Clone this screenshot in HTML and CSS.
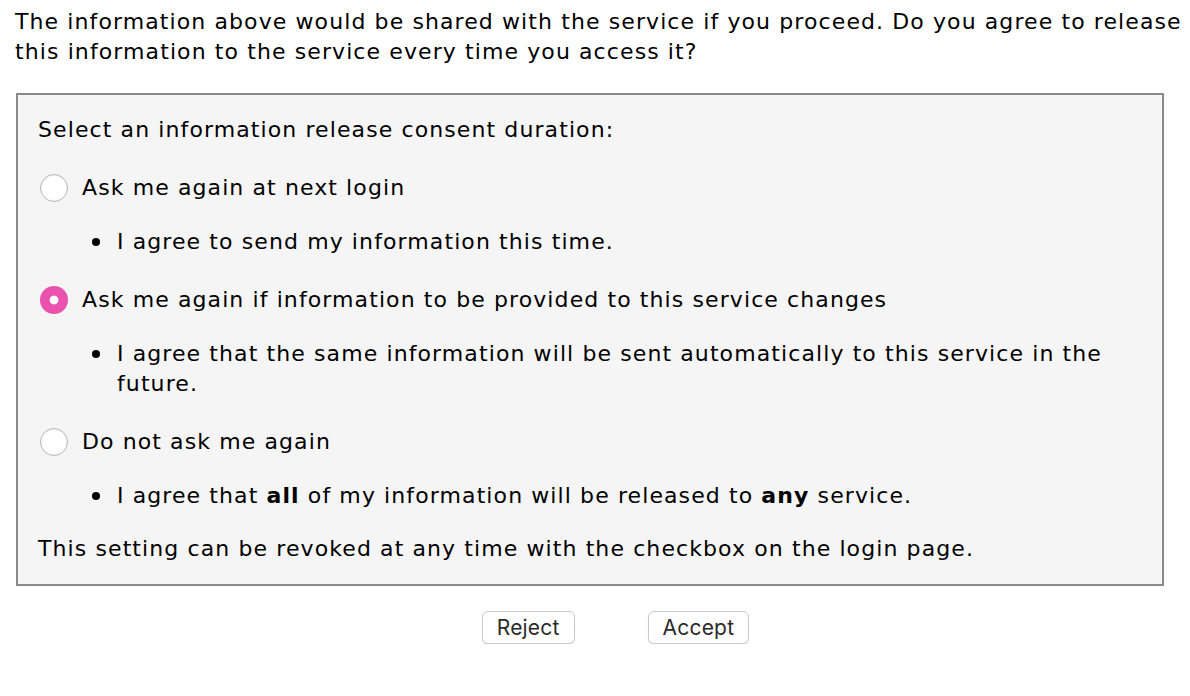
FILE: index.html
```html
<!DOCTYPE html>
<html>
<head>
<meta charset="utf-8">
<link rel="stylesheet" href="styles.css">
</head>
<body>
<div class="page">
  <p class="intro">The information above would be shared with the service if you proceed. Do you agree to release this information to the service every time you access it?</p>
  <form class="consent">
    <div class="box">
      <p class="title">Select an information release consent duration:</p>
      <label class="opt"><span class="radio"></span><span>Ask me again at next login</span></label>
      <ul class="desc"><li>I agree to send my information this time.</li></ul>
      <label class="opt"><span class="radio checked"></span><span>Ask me again if information to be provided to this service changes</span></label>
      <ul class="desc"><li>I agree that the same information will be sent automatically to this service in the future.</li></ul>
      <label class="opt"><span class="radio"></span><span>Do not ask me again</span></label>
      <ul class="desc"><li>I agree that <b>all</b> of my information will be released to <b>any</b> service.</li></ul>
      <p class="note">This setting can be revoked at any time with the checkbox on the login page.</p>
    </div>
    <div class="actions">
      <button type="button" class="btn">Reject</button>
      <button type="button" class="btn">Accept</button>
    </div>
  </form>
</div>
</body>
</html>
```
FILE: styles.css
```css
html, body {
  margin: 0;
  padding: 0;
  background: #ffffff;
}
.page {
  padding: 7px 0 0 15px;
  font-family: "DejaVu Sans", Verdana, sans-serif;
  font-size: 22px;
  line-height: 30px;
  letter-spacing: 1.1px;
  color: #000;
}
.intro {
  margin: 0;
  width: 1172px;
}
.consent {
  margin: 26px 0 0 1px;
  width: 1148px;
}
.box {
  box-sizing: border-box;
  width: 1148px;
  border: 2px solid #8a8a8a;
  background: #f5f5f5;
  padding: 20px 20px 20px 20px;
  display: flex;
  flex-direction: column;
}
.title {
  margin: 0;
}
.opt {
  display: flex;
  align-items: center;
  margin-top: 28px;
  margin-left: 2px;
  gap: 14px;
  height: 30px;
}
.radio {
  box-sizing: border-box;
  width: 28px;
  height: 28px;
  border-radius: 50%;
  border: 1px solid #b8b8b8;
  background: radial-gradient(circle at 50% 40%, #ffffff 60%, #f0f0f0 100%);
  box-shadow: inset 0 1px 1px rgba(0,0,0,0.08);
  flex: none;
}
.radio.checked {
  border: none;
  background: radial-gradient(circle, #ffffff 0 4px, #e953ad 4.8px);
  box-shadow: none;
}
.desc {
  margin: 24px 0 0 0;
  padding: 0 0 0 79px;
  list-style: none;
}
.desc li {
  position: relative;
  line-height: 30px;
}
.desc li::before {
  content: "";
  position: absolute;
  left: -25px;
  top: 11px;
  width: 8px;
  height: 8px;
  border-radius: 50%;
  background: #000;
}
.note {
  margin: 23px 0 0 0;
}
.actions {
  display: flex;
  justify-content: center;
  gap: 73px;
  padding-left: 51px;
  margin-top: 25px;
}
.btn {
  font-family: Inter, "Liberation Sans", sans-serif;
  font-size: 21px;
  letter-spacing: 0.2px;
  color: #2a2a2a;
  background: #ffffff;
  border: 1px solid #c9c9c9;
  border-radius: 6px;
  box-shadow: 0 1px 1px rgba(0,0,0,0.12);
  height: 33px;
  padding: 0 14px;
  line-height: 30px;
}
```
